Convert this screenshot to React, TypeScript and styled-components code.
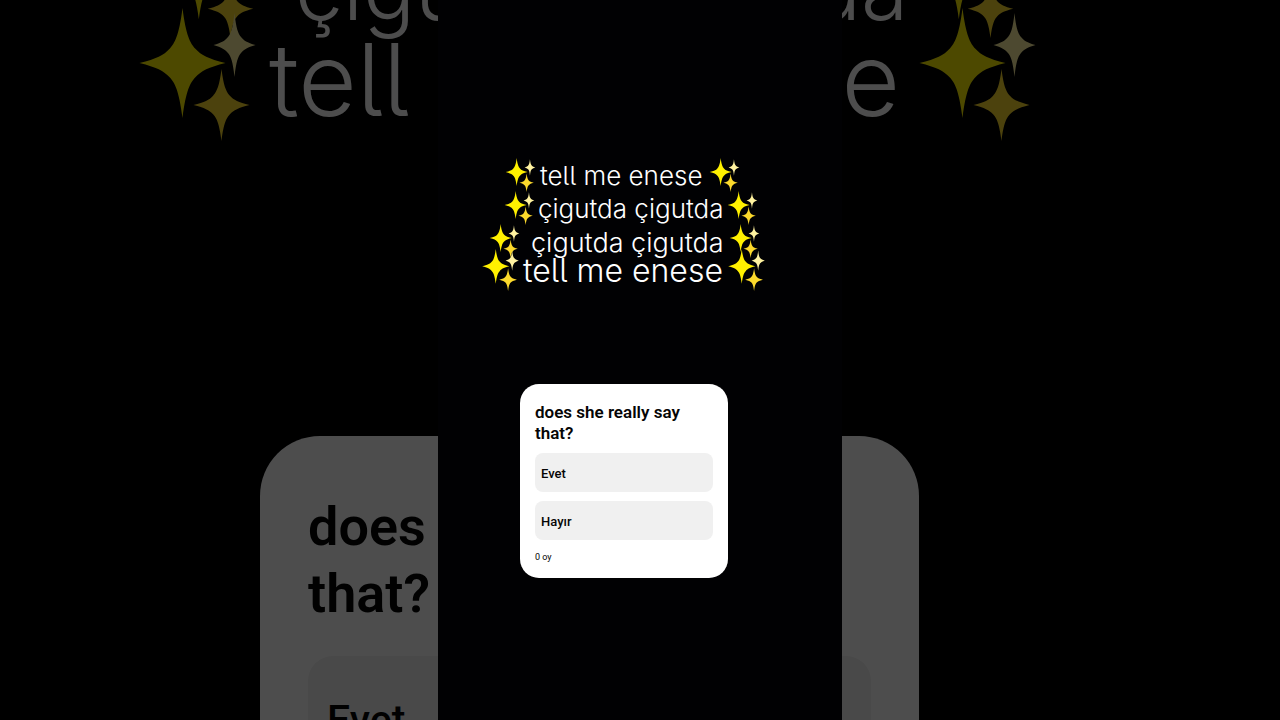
import React from "react";
import styled, { createGlobalStyle } from "styled-components";

const GlobalStyle = createGlobalStyle`
  *, *::before, *::after { box-sizing: border-box; }
  body { margin: 0; background: #000; }
`;

/* Rounds a length of the story to whole pixels at the given zoom. */
const px = (length: number, zoom: number) => `${Math.round(length * zoom)}px`;

type Zoomed = { $zoom: number };

const Page = styled.main`
  position: relative;
  display: flex;
  justify-content: center;
  height: 100vh;
  overflow: hidden;
  background: #000;
`;

/* Dimmed, enlarged copy of the story that fills the window behind the player. */
const Backdrop = styled.div`
  position: absolute;
  inset: 0;
  display: flex;
  align-items: center;
  justify-content: center;
  overflow: hidden;
  opacity: 0.3;
`;

const BackdropFrame = styled.div`
  flex: none;
  width: 100%;
  aspect-ratio: 101 / 180;
`;

const Player = styled.section`
  position: relative;
  height: 100%;
  aspect-ratio: 101 / 180;
  overflow: hidden;
`;

const Scene = styled.div<Zoomed>`
  height: 100%;
  padding-top: ${(p) => px(158, p.$zoom)};
  background: #010103;
`;

const Lyrics = styled.div<Zoomed>`
  display: flex;
  flex-direction: column;
  height: ${(p) => px(226, p.$zoom)};
`;

const LyricLine = styled.div<Zoomed & { $indent: number; $height: number; $overlap: number }>`
  display: flex;
  flex: none;
  align-items: center;
  height: ${(p) => px(p.$height, p.$zoom)};
  margin-top: ${(p) => px(-p.$overlap, p.$zoom)};
  padding-left: ${(p) => px(p.$indent, p.$zoom)};
`;

const LyricText = styled.p<Zoomed & { $size: number; $width: number; $gap: number }>`
  flex: none;
  width: ${(p) => px(p.$width, p.$zoom)};
  margin: 0 ${(p) => px(5, p.$zoom)} 0 ${(p) => px(p.$gap, p.$zoom)};
  padding-top: ${(p) => px(3, p.$zoom)};
  color: #fff;
  font-family: Inter, "Noto Sans", sans-serif;
  font-feature-settings: "cv05" 1;
  font-size: ${(p) => px(p.$size, p.$zoom)};
  font-weight: 300;
  line-height: 1;
  white-space: nowrap;
`;

const SparkleIcon = styled.svg<Zoomed & { $large: boolean }>`
  flex: none;
  width: ${(p) => px(p.$large ? 37 : 31, p.$zoom)};
  height: ${(p) => px(p.$large ? 42 : 34, p.$zoom)};
`;

const PollCard = styled.form<Zoomed>`
  display: flex;
  flex-direction: column;
  gap: ${(p) => px(9, p.$zoom)};
  width: ${(p) => px(208, p.$zoom)};
  margin-left: ${(p) => px(82, p.$zoom)};
  padding: ${(p) => `${px(18, p.$zoom)} ${px(15, p.$zoom)} ${px(15, p.$zoom)}`};
  border-radius: ${(p) => px(19, p.$zoom)};
  background: #fff;
  color: #050505;
  font-family: Roboto, "Liberation Sans", sans-serif;
`;

const Question = styled.h1<Zoomed>`
  margin: 0;
  font-size: ${(p) => px(17, p.$zoom)};
  font-weight: 600;
  line-height: ${(p) => px(21, p.$zoom)};
`;

const Option = styled.button<Zoomed>`
  height: ${(p) => px(39, p.$zoom)};
  padding: ${(p) => px(1, p.$zoom)} ${(p) => px(6, p.$zoom)} 0;
  border: 0;
  border-radius: ${(p) => px(8, p.$zoom)};
  background: #f0f0f0;
  color: inherit;
  font-family: inherit;
  font-size: ${(p) => px(13, p.$zoom)};
  font-weight: 500;
  text-align: left;
  cursor: pointer;
`;

const Votes = styled.p<Zoomed>`
  margin: ${(p) => px(2, p.$zoom)} 0 0;
  font-size: ${(p) => px(9, p.$zoom)};
  line-height: ${(p) => px(12, p.$zoom)};
`;

/* A four-pointed star with concave sides. */
const star = (cx: number, cy: number, w: number, h: number) => {
  const at = (x: number, y: number) => `${cx + x * w} ${cy + y * h}`;
  return [
    `M${at(0, -1)}`,
    `C${at(0.08, -0.5)} ${at(0.18, -0.36)} ${at(0.3, -0.26)}`,
    `C${at(0.44, -0.14)} ${at(0.6, -0.08)} ${at(1, 0)}`,
    `C${at(0.6, 0.08)} ${at(0.44, 0.14)} ${at(0.3, 0.26)}`,
    `C${at(0.18, 0.36)} ${at(0.08, 0.5)} ${at(0, 1)}`,
    `C${at(-0.08, 0.5)} ${at(-0.18, 0.36)} ${at(-0.3, 0.26)}`,
    `C${at(-0.44, 0.14)} ${at(-0.6, 0.08)} ${at(-1, 0)}`,
    `C${at(-0.6, -0.08)} ${at(-0.44, -0.14)} ${at(-0.3, -0.26)}`,
    `C${at(-0.18, -0.36)} ${at(-0.08, -0.5)} ${at(0, -1)}`,
    "Z",
  ].join(" ");
};

function Sparkles({ zoom, large }: { zoom: number; large: boolean }) {
  return (
    <SparkleIcon $zoom={zoom} $large={large} viewBox="0 0 116 133" aria-hidden="true">
      <path d={star(43, 55, 43, 55)} fill="#fff000" />
      <path d={star(95, 37, 21, 32)} fill="#fff2a0" />
      <path d={star(82, 97, 28, 36)} fill="#fcd92c" />
    </SparkleIcon>
  );
}

const lines = [
  { text: "tell me enese", indent: 67, height: 33, overlap: 0, size: 26, width: 164, gap: 4 },
  { text: "çigutda çigutda", indent: 66, height: 33, overlap: 0, size: 26, width: 184, gap: 3 },
  { text: "çigutda çigutda", indent: 51, height: 34, overlap: 0, size: 27, width: 193, gap: 11 },
  { text: "tell me enese", indent: 44, height: 43, overlap: 10, size: 32, width: 200, gap: 4 },
];

function Story({ zoom }: { zoom: number }) {
  return (
    <Scene $zoom={zoom}>
      <Lyrics $zoom={zoom}>
        {lines.map((line, i) => (
          <LyricLine key={i} $zoom={zoom} $indent={line.indent} $height={line.height} $overlap={line.overlap}>
            <Sparkles zoom={zoom} large={line.size > 30} />
            <LyricText $zoom={zoom} $size={line.size} $width={line.width} $gap={line.gap}>
              {line.text}
            </LyricText>
            <Sparkles zoom={zoom} large={line.size > 30} />
          </LyricLine>
        ))}
      </Lyrics>
      <PollCard $zoom={zoom}>
        <Question $zoom={zoom}>does she really say that?</Question>
        <Option $zoom={zoom} type="button">Evet</Option>
        <Option $zoom={zoom} type="button">Hayır</Option>
        <Votes $zoom={zoom}>0 oy</Votes>
      </PollCard>
    </Scene>
  );
}

export default function App() {
  return (
    <>
      <GlobalStyle />
      <Page>
        <Backdrop aria-hidden="true" inert>
          <BackdropFrame>
            <Story zoom={3.168} />
          </BackdropFrame>
        </Backdrop>
        <Player>
          <Story zoom={1} />
        </Player>
      </Page>
    </>
  );
}
